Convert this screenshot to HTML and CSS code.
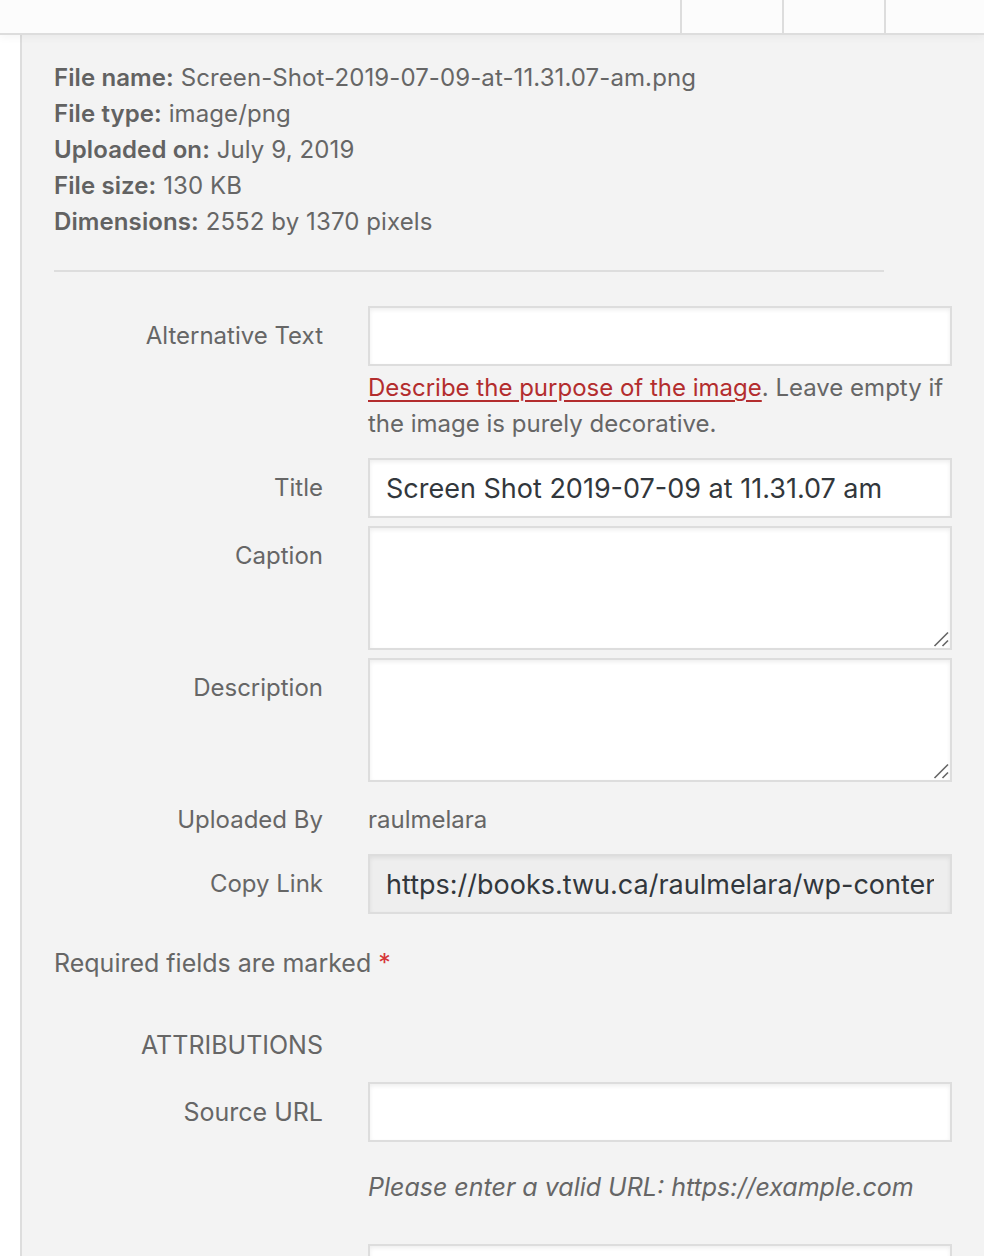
FILE: index.html
```html
<!DOCTYPE html>
<html lang="en">
<head>
<meta charset="utf-8">
<title>Attachment Details</title>
<link rel="stylesheet" href="styles.css">
</head>
<body>
<header class="topbar">
  <div class="topbar-fill"></div>
  <div class="tab"></div>
  <div class="tab"></div>
  <div class="tab tab-last"></div>
</header>
<div class="frame">
  <div class="gutter"></div>
  <main class="panel">
    <div class="meta">
      <div class="meta-line"><strong>File name:</strong> Screen-Shot-2019-07-09-at-11.31.07-am.png</div>
      <div class="meta-line"><strong>File type:</strong> image/png</div>
      <div class="meta-line"><strong>Uploaded on:</strong> July 9, 2019</div>
      <div class="meta-line"><strong>File size:</strong> 130 KB</div>
      <div class="meta-line"><strong>Dimensions:</strong> 2552 by 1370 pixels</div>
    </div>
    <hr class="divider">
    <div class="settings">
      <label class="row row-alt">
        <span class="label">Alternative Text</span>
        <input class="field" type="text" value="">
      </label>
      <p class="help"><a href="#" class="help-link">Describe the purpose of the image</a>. Leave empty if the image is purely decorative.</p>

      <label class="row row-title">
        <span class="label">Title</span>
        <input class="field field-filled" type="text" value="Screen Shot 2019-07-09 at 11.31.07 am">
      </label>

      <label class="row">
        <span class="label">Caption</span>
        <span class="area-wrap">
          <textarea class="field area"></textarea>
          <svg class="grip" width="16" height="16" viewBox="0 0 16 16" aria-hidden="true"><path d="M1.5 15 L15 1.5 M9.5 15 L15 9.5" stroke="#666" stroke-width="1.6" fill="none"/></svg>
        </span>
      </label>

      <label class="row">
        <span class="label">Description</span>
        <span class="area-wrap">
          <textarea class="field area"></textarea>
          <svg class="grip" width="16" height="16" viewBox="0 0 16 16" aria-hidden="true"><path d="M1.5 15 L15 1.5 M9.5 15 L15 9.5" stroke="#666" stroke-width="1.6" fill="none"/></svg>
        </span>
      </label>

      <div class="row row-plain">
        <span class="label">Uploaded By</span>
        <span class="value">raulmelara</span>
      </div>

      <label class="row row-copy">
        <span class="label">Copy Link</span>
        <input class="field field-filled field-readonly" type="text" readonly value="https://books.twu.ca/raulmelara/wp-content/uploads/sites/5/2019/07/Screen-Shot-2019-07-09-at-11.31.07-am.png">
      </label>
    </div>

    <p class="required">Required fields are marked <span class="asterisk">*</span></p>

    <div class="row row-heading">
      <span class="label label-heading">ATTRIBUTIONS</span>
    </div>

    <label class="row row-source">
      <span class="label label-lg">Source URL</span>
      <input class="field" type="text" value="">
    </label>
    <p class="help help-italic">Please enter a valid URL: https://example.com</p>

    <label class="row">
      <span class="label"></span>
      <input class="field" type="text" value="">
    </label>
  </main>
</div>
</body>
</html>
```

FILE: styles.css
```css
* { box-sizing: border-box; }

html, body {
  margin: 0;
  padding: 0;
}

body {
  font-family: Inter, "Noto Sans", sans-serif;
  color: #666;
  background: #f3f3f3;
  height: 1256px;
  overflow: hidden;
}

.topbar {
  display: grid;
  grid-template-columns: 1fr 102px 102px 100px;
  height: 35px;
  background: #fcfcfc;
  border-bottom: 2px solid #dddddd;
  position: relative;
  z-index: 2;
  box-shadow: 0 3px 8px rgba(0, 0, 0, 0.04);
}

.tab {
  border-left: 2px solid #dddddd;
}

.frame {
  display: flex;
  min-height: 1221px;
}

.gutter {
  width: 22px;
  flex: none;
  background: #ffffff;
  border-right: 2px solid #dddddd;
}

.panel {
  flex: 1;
  background: #f3f3f3;
  padding: 25px 32px 0 32px;
}

.meta-line {
  font-size: 24px;
  line-height: 36px;
  color: #666;
  white-space: nowrap;
  letter-spacing: 0.1px;
}

.meta-line strong {
  font-weight: 600;
  color: #626262;
}

.divider {
  width: 830px;
  margin: 30px 0 34px 0;
  border: 0;
  border-top: 2px solid #dddddd;
  height: 0;
}

.row {
  display: grid;
  grid-template-columns: 269px 584px;
  column-gap: 45px;
  align-items: start;
  margin-bottom: 8px;
}

.label {
  text-align: right;
  font-size: 24px;
  line-height: 36px;
  padding-top: 12px;
  color: #666;
  white-space: nowrap;
}

.label-lg {
  font-size: 25px;
}

.field {
  display: block;
  width: 584px;
  height: 60px;
  margin: 0;
  border: 2px solid #dddddd;
  background: #ffffff;
  box-shadow: inset 0 2px 4px rgba(0, 0, 0, 0.07);
  border-radius: 0;
  padding: 0 16px;
  font-family: Inter, "Noto Sans", sans-serif;
  font-size: 27px;
  color: #32373c;
  outline: none;
}

.area-wrap {
  position: relative;
  display: block;
  width: 584px;
  height: 124px;
}

.area {
  height: 124px;
  resize: none;
  padding: 10px 16px;
}

.grip {
  position: absolute;
  right: 3px;
  bottom: 3px;
}

.field-readonly {
  background: #eeeeee;
}

.row-alt {
  margin-bottom: 4px;
}

.help {
  margin: 0 0 16px 314px;
  font-size: 24px;
  line-height: 36px;
  color: #666;
}

.help-link {
  color: #b32d2e;
  text-decoration: underline;
  text-underline-offset: 4px;
}

.row-plain {
  padding-bottom: 8px;
}

.value {
  font-size: 24px;
  line-height: 36px;
  padding-top: 12px;
  color: #666;
}

.row-copy {
  margin-bottom: 0;
}

.required {
  margin: 31px 0 0 0;
  font-size: 25px;
  line-height: 36px;
  color: #666;
}

.asterisk {
  color: #d63638;
}

.row-heading {
  margin: 46px 0 0 0;
}

.label-heading {
  padding-top: 0;
  font-size: 25px;
}

.row-source {
  margin: 19px 0 0 0;
}

.help-italic {
  font-style: italic;
  margin: 27px 0 39px 314px;
  font-size: 25px;
}
```
